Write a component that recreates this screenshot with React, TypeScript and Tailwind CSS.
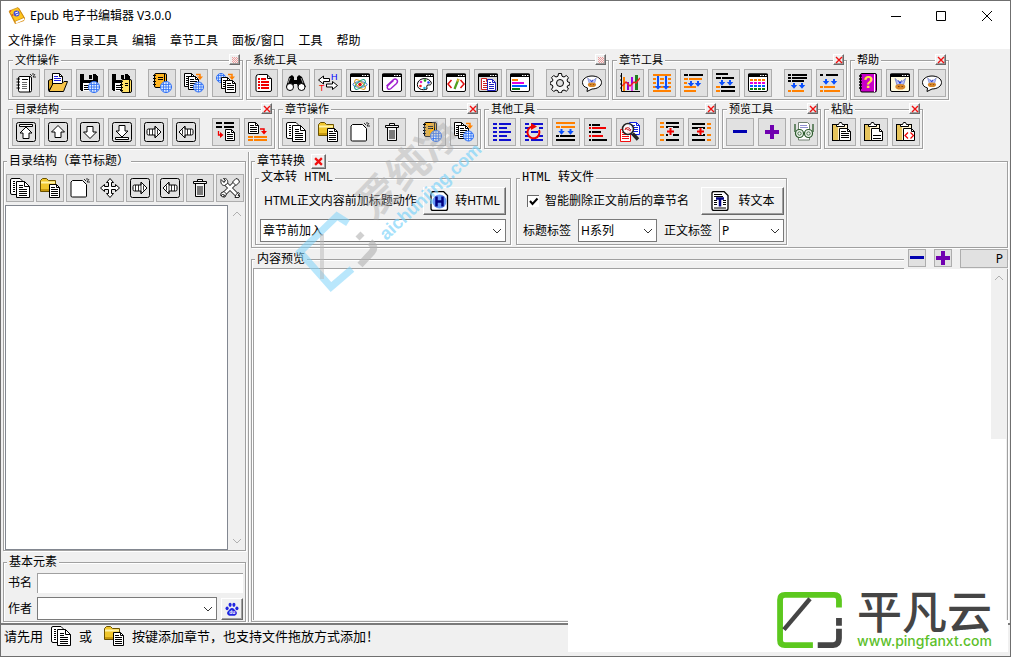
import { useState } from "react";
import type { ReactNode } from "react";

const ETCHED = "border border-[#a0a0a0] shadow-[1px_1px_0_#fff,inset_1px_1px_0_#fff]";
const RAISED = "border border-t-[#fff] border-l-[#fff] border-r-[#696969] border-b-[#696969] bg-[#f0f0f0] shadow-[inset_-1px_-1px_0_#a0a0a0]";

/* ---------- icon parts, all on a 20x20 grid ---------- */

type Bar = [number, number, number, string];

const K = "#000";
const O = "#ff8000";
const R = "#f00000";
const B = "#1010d0";

const Bars = ({ items, h = 2 }: { items: Bar[]; h?: number }) => (
  <g shapeRendering="crispEdges">
    {items.map(([x, y, w, c], i) => (
      <rect key={i} x={x} y={y} width={w} height={h} fill={c} />
    ))}
  </g>
);

const Page = ({ x, y, w = 11, h = 14, c = K, lines = true }: { x: number; y: number; w?: number; h?: number; c?: string; lines?: boolean }) => (
  <g>
    <path d={`M${x + 0.5} ${y + 0.5}h${w - 4}l3 3v${h - 4}h${-(w - 1)}z`} fill="#fff" stroke={c} />
    <path d={`M${x + w - 3.5} ${y + 0.5}v3h3`} fill="none" stroke={c} />
    {lines && <path d={`M${x + 2} ${y + 3.5}h${w - 7}M${x + 2} ${y + 5.5}h${w - 4}M${x + 2} ${y + 7.5}h${w - 4}M${x + 2} ${y + 9.5}h${w - 4}M${x + 2} ${y + 11.5}h${h > 13 ? w - 4 : 0}`} stroke={c} />}
  </g>
);

const Pages = () => (
  <g>
    <path d="M2 .5h8l2 2v14H2q-1.500 0-1.500-1.500V2Q.5.5 2 .5z" fill="#fff" stroke={K} />
    <path d="M3 3.500h2M3 5.500h2M3 7.500h2M3 9.500h2M3 11.500h2M3 13.500h2" stroke={K} />
    <path d="M6.500 3.500h8l5 5v11h-13z" fill="#fff" stroke={K} />
    <path d="M14.500 3.500v5h5M9 7.500h4M9 9.500h4M9 11.500h8M9 13.500h8M9 15.500h8M9 17.500h8" fill="none" stroke={K} />
  </g>
);

const Globe = ({ x, y, r = 5.5 }: { x: number; y: number; r?: number }) => (
  <g>
    <circle cx={x} cy={y} r={r} fill="#e4f0ff" stroke="#2a6cf5" />
    <path d={`M${x - r} ${y}h${2 * r}M${x - r + 1} ${y - 2.5}h${2 * r - 2}M${x - r + 1} ${y + 2.5}h${2 * r - 2}M${x} ${y - r}v${2 * r}M${x - 2.5} ${y - r + 1}v${2 * r - 2}M${x + 2.5} ${y - r + 1}v${2 * r - 2}`} stroke="#2a6cf5" strokeWidth=".8" />
  </g>
);

const Notebook = ({ x = 1, y = 0, w = 14, h = 15, fill = "#ffb41e" }: { x?: number; y?: number; w?: number; h?: number; fill?: string }) => (
  <g>
    <rect x={x + 1.5} y={y + 0.5} width={w - 2} height={h - 1} rx="1.500" fill={fill} stroke={K} />
    <path d={`M${x + w - 2.5} ${y + 1}v${h - 2}M${x + 5} ${y + 4.5}h${w - 9}M${x + 5} ${y + 6.5}h${w - 9}`} stroke={K} />
    <path d={`M${x} ${y + 2.5}h3M${x} ${y + 5.5}h3M${x} ${y + 8.5}h3M${x} ${y + 11.5}h3`} stroke={K} />
  </g>
);

const Floppy = () => (
  <g shapeRendering="crispEdges">
    <path d="M0 1h15l3 3v14H1l-1-1z" fill={K} />
    <rect x="4" y="1" width="9" height="6" fill="#e1e1e1" />
    <rect x="9" y="2" width="3" height="4" fill={K} />
    <rect x="3" y="10" width="11" height="8" fill="#fff" />
    <path d="M4 12.500h9M4 14.500h9M4 16.500h9" stroke={K} />
  </g>
);

const Win = ({ children, fill = "#fff" }: { children?: ReactNode; fill?: string }) => (
  <g>
    <rect x=".5" y="1" width="19" height="17.500" rx="1.500" fill={fill} stroke={K} />
    <path d="M0 1.500q0-1 1-1h18q1 0 1 1v2.500H0z" fill={K} />
    <path d="M12 2.500h1.500M14.500 2.500H16M17 2.500h1.500" stroke="#fff" />
    {children}
  </g>
);

const Down = ({ x, y, h = 6 }: { x: number; y: number; h?: number }) => (
  <path d={`M${x - 1} ${y}h2v${h - 3}h2.200l-3.200 3.700-3.200-3.700h2.200z`} fill="#0a50ff" />
);

const Turn = ({ x, y, c = O }: { x: number; y: number; c?: string }) => (
  <g>
    <path d={`M${x} ${y}h4v3`} fill="none" stroke={c} strokeWidth="1.500" />
    <path d={`M${x + 1} ${y + 2}h6l-3 3.500z`} fill={c} />
  </g>
);

const Boxed = ({ children }: { children: ReactNode }) => (
  <g fill="#fff" stroke={K}>
    <rect x=".5" y=".5" width="19" height="19" rx="2" fill="none" />
    {children}
  </g>
);

const Clipboard = ({ children }: { children?: ReactNode }) => (
  <g>
    <rect x=".5" y="2.500" width="15" height="16" fill="#fff3d0" stroke={K} />
    <path d="M1 3h5v15H1z" fill="#e6c45c" />
    <path d="M4.500 4.500v-2h2l1-2h2l1 2h2v2z" fill="#fff" stroke={K} />
    <Page x={7} y={6} w={12} h={13} lines={false} />
    {children}
  </g>
);

const Folder = () => (
  <g>
    <path d="M.5 13.500v-11l2-2h4l2 2h7v11z" fill="#f0c62c" stroke="#6b5200" />
    <path d="M1 4.500h14" stroke="#fff3a8" strokeWidth="2" />
    <path d="M1 11h8v2H1z" fill="#c89a10" />
    <Page x={9} y={6} w={11} h={14} />
  </g>
);

const Cow = () => (
  <g>
    <path d="M5 5.500l4 3.500h2.500L15.500 5.500 13.500 12H7z" fill="#b4c0ff" stroke="#6870c0" strokeWidth=".7" />
    <path d="M8.500 7.500l1.500 3 1.500-3" fill="none" stroke="#2038d0" />
    <ellipse cx="10.300" cy="13.800" rx="5" ry="2.800" fill="#d98a2b" />
    <path d="M8 13.500h1.500M11.500 13.500H13" stroke="#804010" />
  </g>
);

const Spark = () => <path d="M14 1l2 2M17 0v2M17 4h3M19 1l-2 3" stroke={K} strokeWidth=".8" />;

const Paw = () => (
  <g fill="#2226e0">
    <ellipse cx="3" cy="9" rx="2.200" ry="2.700" />
    <ellipse cx="7.300" cy="4" rx="2.200" ry="3" />
    <ellipse cx="12.700" cy="4" rx="2.200" ry="3" />
    <ellipse cx="17" cy="9" rx="2.200" ry="2.700" />
    <path d="M10 8.500c2.500 0 3.500 2.500 5.500 4.500 3 2.500 1 6.500-2 6.500H6.500c-3 0-5-4-2-6.500C6.500 11 7.500 8.500 10 8.500z" />
    <text x="6" y="17.500" fontSize="7" fontWeight="bold" fill="#fff" fontFamily="Liberation Sans, sans-serif">du</text>
  </g>
);

const icons: Record<string, ReactNode> = {
  newBook: (
    <g>
      <rect x="2.500" y="3.500" width="13" height="15.500" rx="1.500" fill="#fff" stroke={K} />
      <path d="M13.500 4v15M6 6.500h6" stroke={K} />
      <path d="M6 9.500h5M6 11.500h5M6 13.500h5M6 15.500h5" stroke="#444" strokeWidth=".8" />
      <path d="M.5 6h3.500M.5 9h3.500M.5 12h3.500M.5 15h3.500" stroke={K} />
      <Spark />
    </g>
  ),
  open: (
    <g>
      <path d="M.5 17.500V7.500l2-1h4v4z" fill="#d9a520" stroke={K} />
      <Page x={4} y={0} w={11} h={13} lines={false} />
      <path d="M6 3.500h4M6 5.500h7M6 7.500h7" stroke="#2020e0" />
      <path d="M1 18.500l4-8h9l2-2h3.500l-4 10z" fill="#f7c44a" stroke={K} />
    </g>
  ),
  saveWeb: <g><Floppy /><Globe x={14} y={14} /></g>,
  saveBook: <g><Floppy /><Notebook x={8} y={6} w={12} h={14} fill="#ffe066" /></g>,
  bookWeb: <g><Notebook /><Globe x={14} y={14} /></g>,
  pagesWeb: (
    <g><Page x={0} y={0} /><Page x={4} y={3} /><Turn x={12} y={1.5} /><Globe x={14.5} y={14} r={5} /></g>
  ),
  webPages: (
    <g><Globe x={5} y={5} r={4.5} /><Turn x={12} y={1.5} /><Page x={5} y={4} w={10} h={12} /><Page x={9} y={7} w={11} h={13} /></g>
  ),
  redList: (
    <g>
      <path d="M4.500 1.500h8.500l4.500 4.500v11q0 1.500-1.500 1.500H3.500Q2 18.500 2 17V4q0-2.500 2.500-2.500z" fill="#fff" stroke={K} />
      <path d="M13.500 1.500v4h4" fill="none" stroke={K} />
      <Bars items={[[4, 5, 2, R], [7, 5, 5, R], [4, 8, 2, R], [7, 8, 8, R], [4, 11, 2, R], [7, 11, 8, R], [4, 14, 2, R], [7, 14, 8, R]]} />
    </g>
  ),
  find: (
    <g>
      <path d="M3 4l3-2 2 2v3h3V4l2-2 3 2 4 10h-8l-1-3h-3l-1 3H0z" fill={K} />
      <circle cx="4" cy="14" r="3.500" fill="#fff" stroke={K} />
      <circle cx="15.500" cy="14" r="3.500" fill="#fff" stroke={K} />
      <path d="M4 5l-2 5M15 5l2 5" stroke="#fff" strokeOpacity=".6" />
    </g>
  ),
  swap: (
    <g>
      <path d="M.5 7l5-4v2.500h6v3h-6V11zM19.500 12.500l-5-4V11h-6v3h6v2.500z" fill="#fff" stroke={K} />
      <text x="13" y="7" fontSize="9" fill="#0000ff" fontFamily="Liberation Sans, sans-serif">H</text>
      <text x="1" y="18" fontSize="9" fill="#ff0000" fontFamily="Liberation Sans, sans-serif">T</text>
    </g>
  ),
  atom: (
    <Win>
      <g fill="none">
        <ellipse cx="10" cy="11.500" rx="7" ry="2.800" stroke="#3870d0" />
        <ellipse cx="10" cy="11.500" rx="6.500" ry="2.800" stroke="#d8a020" transform="rotate(40 10 11.500)" />
        <ellipse cx="10" cy="11.500" rx="6.500" ry="2.800" stroke="#20a080" transform="rotate(-40 10 11.500)" />
      </g>
      <circle cx="10" cy="11.500" r="1.800" fill="#e01010" />
    </Win>
  ),
  clip: (
    <Win>
      <path d="M4.500 13l6.500-6c3-2.500 6 .5 3.500 3.500l-5.500 5c-2.500 2-5-.5-3-3l5.500-5" fill="none" stroke="#a020d0" strokeWidth="1.400" />
    </Win>
  ),
  palette: (
    <Win>
      <path d="M4 9c3-5 11-4 13 0 1 3-1 3-3 3s-1 2-1 4c-4 2-12 0-9-7z" fill="#fff" stroke={K} />
      <circle cx="7" cy="9" r="1.300" fill="#e020c0" /><circle cx="11" cy="7.500" r="1.300" fill="#18a018" />
      <circle cx="14.500" cy="9.500" r="1.300" fill="#2040ff" /><circle cx="6.500" cy="13" r="1.300" fill="#ff2020" /><circle cx="10.500" cy="15" r="1.300" fill="#20b0e0" />
    </Win>
  ),
  code: (
    <Win>
      <path d="M5.500 7L2 11l3.500 4M14.500 7l3.500 4-3.500 4" fill="none" stroke="#e01010" strokeWidth="1.500" />
      <path d="M12.500 6l-4 10" stroke="#50a020" strokeWidth="2.200" />
      <path d="M12.500 6l-1 2.500" stroke="#e0b030" strokeWidth="2" />
    </Win>
  ),
  winPages: <Win fill="#d8d8d8"><Page x={3} y={5} w={9} h={12} c="#d02020" /><Page x={9} y={6} w={9} h={12} c="#2020c0" /></Win>,
  winBars: (
    <Win>
      <Bars items={[[2, 6, 6, O], [2, 9, 12, "#e000e0"], [2, 12, 15, "#0060ff"], [2, 15, 8, "#108010"]]} />
    </Win>
  ),
  gear: (
    <g fill="none" stroke={K}>
      <path d="M8.500.5h3l.5 2.700 2 .8 2.300-1.500 2.200 2.200L17 7l.8 2 2 .5v2.500l-2 .5L17 14l1.500 2-2.200 2.200L14 17l-2 .8-.5 2h-3L8 17.800 6 17l-2.300 1.500-2.200-2.200L3 14l-.8-2-2-.5V9l2-.5L3 7 1.500 4.700l2.200-2.200L6 4l2-.8z" fill="#f6f6f6" />
      <circle cx="10" cy="10" r="3.500" fill="#e1e1e1" />
    </g>
  ),
  bubble: (
    <g>
      <path d="M10 3c5.500 0 9.500 3 9.500 6.500S15.500 16 10 16l-5 2.500.5-3.500C2 14 .5 12 .5 9.500.5 6 4.500 3 10 3z" fill="#fff" stroke={K} />
      <g transform="translate(1.500 .5) scale(.82)"><Cow /></g>
    </g>
  ),
  chart: (
    <g>
      <Bars h={8} items={[[3, 10, 2, "#ff8000"], [7, 9, 2, "#9000d0"], [11, 10, 2, "#e040e0"], [15, 9, 3, "#208020"]]} />
      <Bars h={7} items={[[3, 4, 2, O], [11, 4, 2, "#a000e0"], [15, 2, 3, "#208020"]]} />
      <path d="M1.500 0v18.500H20M0 3h2M0 7h2M0 11h2M0 15h2" fill="none" stroke={K} />
      <path d="M2 13l4-4 4 4 4-4 2 1 4-5" fill="none" stroke="#f02020" strokeWidth="1.400" />
    </g>
  ),
  fullDown: (
    <g>
      <Bars items={[[1, 1, 18, O], [1, 5, 18, O], [1, 9, 18, O], [1, 13, 18, O], [1, 17, 18, O]]} />
      <path d="M4 3h4v13H4zM12 3h4v13h-4z" fill="#e1e1e1" />
      <Down x={6} y={3} h={13} /><Down x={14} y={3} h={13} />
    </g>
  ),
  moveA: (
    <g>
      <Bars items={[[0, 1, 4, K], [5, 1, 14, K], [0, 5, 4, O], [5, 5, 13, O], [0, 9, 3, O], [0, 13, 12, O], [0, 17, 12, O]]} />
      <Down x={7} y={8} h={5} /><Down x={14} y={8} h={5} />
    </g>
  ),
  moveB: (
    <g>
      <Bars items={[[0, 0, 12, K], [0, 4, 5, K], [6, 4, 12, K], [0, 13, 4, O], [5, 13, 14, K], [0, 17, 4, O], [5, 17, 14, K]]} />
      <Down x={6} y={7} h={5} /><Down x={14} y={7} h={5} />
    </g>
  ),
  table: (
    <Win>
      <Bars items={[[2, 6, 3, O], [6, 6, 3, O], [10, 6, 3, O], [14, 6, 3, O], [2, 9, 3, "#e000e0"], [6, 9, 3, "#e000e0"], [10, 9, 3, "#e000e0"], [14, 9, 3, "#e000e0"], [2, 12, 3, "#0060ff"], [6, 12, 3, "#0060ff"], [10, 12, 3, "#0060ff"], [14, 12, 3, "#0060ff"], [2, 15, 3, "#108010"], [6, 15, 3, "#108010"], [10, 15, 3, "#108010"], [14, 15, 3, "#108010"]]} />
    </Win>
  ),
  splitA: (
    <g>
      <Bars items={[[0, 1, 3, K], [4, 1, 15, K], [0, 4, 3, K], [4, 4, 15, K], [0, 7, 3, K], [4, 7, 12, K], [0, 17, 3, O], [4, 17, 12, O]]} />
      <Down x={6} y={10} h={5} /><Down x={14} y={10} h={5} />
    </g>
  ),
  splitB: (
    <g>
      <Bars items={[[0, 1, 3, K], [6, 1, 12, K], [0, 13, 3, O], [4, 13, 11, O], [0, 17, 3, O], [4, 17, 16, O]]} />
      <Down x={6} y={6} h={5} /><Down x={14} y={6} h={5} />
    </g>
  ),
  helpBook: (
    <g>
      <rect x="2.500" y=".5" width="16" height="18.500" rx="1.500" fill="#c800c8" stroke={K} />
      <path d="M16.500 1v18" stroke="#fff" />
      <path d="M1 3h3M1 6h3M1 9h3M1 12h3M1 15h3" stroke={K} strokeWidth="1.300" />
      <text x="5.500" y="15" fontSize="16" fontWeight="bold" fill="#ffe840" fontFamily="Liberation Sans, sans-serif">?</text>
    </g>
  ),
  winCow: <Win fill="#fffbe0"><Cow /></Win>,
  toTop: <Boxed><path d="M3.500 2.500h13v2h-13zM10 5l6 6h-3v5.500H7V11H4z" /></Boxed>,
  up: <Boxed><path d="M10 3.500l6.500 6.500h-3.500v5.500H7V10H3.500z" /></Boxed>,
  down: <Boxed><path d="M10 16.500L3.500 10H7V4.500h6V10h3.500z" /></Boxed>,
  toEnd: <Boxed><path d="M3.500 15.500h13v2h-13zM10 15L4 9h3V3.500h6V9h3z" /></Boxed>,
  right: <Boxed><path d="M17 10l-6-6v3H4.500Q3 7 3 8.500v3Q3 13 4.500 13H11v3z" /><path d="M5.500 7v6M8.500 7v6M11 5v10M13.500 7.500v5" strokeWidth=".8" /></Boxed>,
  left: <Boxed><path d="M3 10l6-6v3h6.500Q17 7 17 8.500v3q0 1.500-1.500 1.500H9v3z" /><path d="M14.500 7v6M11.500 7v6M9 5v10M6.500 7.500v5" strokeWidth=".8" /></Boxed>,
  linesDoc: (
    <g>
      <Bars items={[[0, 0, 6, K], [8, 0, 10, K], [0, 4, 6, K], [8, 4, 10, K]]} />
      <path d="M2.500 9v4h3" fill="none" stroke={R} strokeWidth="1.300" /><path d="M4 10l3.500 3L4 16z" fill={R} />
      <Page x={9} y={7} w={10} h={12} />
    </g>
  ),
  docLines: (
    <g>
      <Page x={0} y={0} w={11} h={12} />
      <Turn x={12} y={7} c={R} />
      <Bars items={[[0, 14, 5, O], [6, 14, 13, O], [0, 17, 5, O], [6, 17, 13, O]]} />
    </g>
  ),
  pages: <Pages />,
  folder: <Folder />,
  blank: (
    <g>
      <path d="M2.500 2.500h10l4 4v11.500q0 1-1 1H2.500q-1.500 0-1.500-1V4z" fill="#fff" stroke={K} />
      <Spark />
    </g>
  ),
  trash: (
    <g fill="none" stroke={K}>
      <path d="M7.500 3.500v-2h5v2M3.500 3.500h13v2h-13zM5.500 5.500v13h9v-13" fill="#f4f4f4" />
      <path d="M8 8v9M10 8v9M12 8v9" />
    </g>
  ),
  list: <Bars items={[[1, 1, 4, B], [7, 1, 12, B], [1, 5, 4, B], [7, 5, 8, B], [1, 9, 4, B], [7, 9, 12, B], [1, 13, 4, B], [7, 13, 8, B], [1, 17, 4, B], [7, 17, 12, B]]} />,
  refresh: (
    <g>
      <Bars items={[[1, 1, 4, B], [7, 1, 12, B], [1, 5, 4, B], [15, 5, 4, B], [1, 9, 3, B], [7, 9, 7, B], [1, 13, 4, B], [15, 13, 4, B], [1, 17, 4, B], [7, 17, 12, B]]} />
      <path d="M8 4.500a6 6 0 1 0 7 3.500" fill="none" stroke={R} strokeWidth="2" />
      <path d="M7 1l6 3.500L7 8z" fill={R} />
    </g>
  ),
  merge: (
    <g>
      <Bars items={[[0, 0, 19, O], [0, 4, 4, O], [5, 4, 14, O], [0, 13, 3, K], [4, 13, 15, K], [0, 17, 19, K]]} />
      <Down x={5.5} y={7} h={5} /><Down x={14.5} y={7} h={5} />
    </g>
  ),
  mixedList: <Bars items={[[1, 2, 2, K], [4, 2, 8, K], [1, 5, 2, R], [4, 5, 14, R], [1, 9, 2, K], [4, 9, 9, K], [1, 13, 2, R], [4, 13, 11, R], [1, 17, 2, K], [4, 17, 15, K]]} />,
  search: (
    <g>
      <Page x={9} y={0} w={11} h={13} c="#1020e0" /><Page x={0} y={7} w={11} h={13} c="#f01010" />
      <circle cx="8" cy="7" r="5.500" fill="#fff" fillOpacity=".85" stroke="#222" strokeWidth="1.500" />
      <path d="M5 8q2-5 6 0M5 6l6 3" fill="none" stroke="#d02020" />
      <path d="M12.500 11.500L18 17.500" stroke="#222" strokeWidth="3.500" />
    </g>
  ),
  insertA: (
    <g>
      <Bars items={[[0, 0, 4, O], [6, 0, 13, K], [0, 4, 4, O], [6, 4, 13, K], [0, 12, 4, O], [6, 12, 13, K], [0, 17, 4, O], [6, 17, 13, K]]} />
      <path d="M8 5h5v9H8z" fill="#e1e1e1" />
      <path d="M10.500 6v7M7 9.500h7" stroke={R} strokeWidth="2" />
    </g>
  ),
  insertB: (
    <g>
      <Bars items={[[0, 1, 13, K], [15, 1, 4, O], [0, 5, 13, K], [15, 5, 4, O], [0, 12, 13, K], [15, 12, 4, O], [0, 17, 13, K], [15, 17, 4, O]]} />
      <path d="M6 6h5v7H6z" fill="#e1e1e1" />
      <path d="M8.500 6v7M5 9.500h7" stroke={R} strokeWidth="2" />
    </g>
  ),
  minus: <path d="M3 9.500h14" stroke="#0000b0" strokeWidth="3" shapeRendering="crispEdges" />,
  plus: <path d="M10 3v14M3 10h14" stroke="#7000b0" strokeWidth="4" shapeRendering="crispEdges" />,
  glasses: (
    <g>
      <path d="M4.500.5h9l2 2V18h-11z" fill="#fff" stroke="#708070" />
      <path d="M6 3.500h7M6 5.500h8" stroke="#9090d0" />
      <path d="M1 2v8M19 2v8" stroke="#285828" strokeWidth="1.300" />
      <circle cx="5.500" cy="11.500" r="4" fill="#eef4ee" stroke="#285828" strokeWidth="1.200" />
      <circle cx="14.500" cy="11.500" r="4" fill="#eef4ee" stroke="#285828" strokeWidth="1.200" />
      <circle cx="5.500" cy="11.500" r="1.700" fill="none" stroke="#285828" strokeWidth=".8" /><circle cx="14.500" cy="11.500" r="1.700" fill="none" stroke="#285828" strokeWidth=".8" />
    </g>
  ),
  paste: <Clipboard><path d="M9 9.500h5M9 11.500h8M9 13.500h8M9 15.500h8" stroke={K} /></Clipboard>,
  pasteLine: <Clipboard><path d="M9 13.500h8M9 16.500h8" stroke={K} /></Clipboard>,
  pasteCode: <Clipboard><path d="M12 10.500l-3 3 3 3M14.500 10.500l3 3-3 3" fill="none" stroke={R} strokeWidth="1.200" /></Clipboard>,
  move: (
    <path d="M10 .5l3.500 4h-2v4h4v-2l4 3.500-4 3.500v-2h-4v4h2l-3.500 4-3.500-4h2v-4h-4v2L.5 10l4-3.500v2h4v-4h-2z" fill="#fff" stroke={K} />
  ),
  tools: (
    <g strokeLinejoin="round">
      <path d="M3 17L15 5M17 17L5 5" stroke="#222" strokeWidth="4.500" strokeLinecap="round" />
      <path d="M3 17L15 5M17 17L5 5" stroke="#fff" strokeWidth="2.700" strokeLinecap="round" />
      <path d="M1 1.500l3 3 1.500-2-2-2c3-.5 5 2 4 5l-3 2C1.500 7.500.5 5 1 1.500zM12.500 4l3.500-3.500q3 0 3.500 3.500L16 7.500zM1 15l3-1.500L6.500 16 5 19H3.500l1-2-2-.5L1 18z" fill="#fff" stroke="#222" />
      <path d="M15 19.500l1-3 2.500-2 1 1.500-1.500 1 .5 1 1.500-.5-1 2z" fill="#fff" stroke="#222" />
    </g>
  ),
};

const Icon = ({ name, className = "" }: { name: string; className?: string }) => (
  <svg viewBox="0 0 20 20" className={`h-5 w-5 shrink-0 ${className}`} aria-hidden="true">{icons[name]}</svg>
);

/* ---------- controls ---------- */

const ToolButton = ({ name, small }: { name: string; small?: boolean }) => (
  <button
    type="button"
    aria-label={name}
    className={`flex shrink-0 items-center justify-center border border-[#adadad] bg-[#e1e1e1] hover:bg-[#e5f1fb] ${small ? "h-[18px] w-[18px]" : "h-7 w-7"}`}
  >
    <Icon name={name} />
  </button>
);

const CloseX = ({ pale, big }: { pale?: boolean; big?: boolean }) => (
  <button type="button" aria-label="close" className={`flex shrink-0 items-center justify-center ${RAISED} ${big ? "h-[15px] w-[15px]" : "h-[11px] w-[11px]"}`}>
    <svg viewBox="0 0 8 8" className={`shrink-0 ${big ? "h-[9px] w-[9px]" : "h-2 w-2"}`}>
      {pale ? (
        <path d="M1 1.500h6M2 2.500h6M1 3.500h6M2 4.500h6M1 5.500h6M2 6.500h6" stroke="#f09a9a" strokeDasharray="1 1" shapeRendering="crispEdges" />
      ) : (
        <path d="M1 1l6 6M7 1L1 7" stroke="#f01010" strokeWidth={big ? 2 : 1.4} />
      )}
    </svg>
  </button>
);

type Group = { title: string; tools: string[]; extra?: string[]; pale?: boolean };

const ToolGroup = ({ title, tools, extra = [], pale }: Group) => (
  <section className={`relative flex shrink-0 pt-2 pr-0.5 pb-0.5 pl-[3px] ${ETCHED}`}>
    <h2 className="absolute -top-[9px] left-1 bg-[#f0f0f0] px-0.5 text-[11px] leading-4">{title}</h2>
    <div className="absolute -top-[7px] right-0.5"><CloseX pale={pale} /></div>
    <div className="flex gap-3">
      <div className="flex gap-1">{tools.map((t) => <ToolButton key={t} name={t} />)}</div>
      {extra.length > 0 && <div className="flex gap-1">{extra.map((t) => <ToolButton key={t} name={t} />)}</div>}
    </div>
  </section>
);

const Chevron = ({ up, className = "" }: { up?: boolean; className?: string }) => (
  <svg viewBox="0 0 10 6" className={`h-1.5 w-2.5 ${className}`} fill="none" stroke="currentColor">
    <path d={up ? "M1 5l4-4 4 4" : "M1 1l4 4 4-4"} />
  </svg>
);

const Select = ({ id, options, label, className = "" }: { id: string; options: string[]; label?: string; className?: string }) => (
  <div className={`relative ${className}`}>
    <select id={id} aria-label={label} className="block h-[23px] w-full appearance-none rounded-none border border-[#7a7a7a] bg-white pl-0.5 text-xs leading-5 outline-none">
      {options.map((o) => <option key={o}>{o}</option>)}
    </select>
    <Chevron className="pointer-events-none absolute top-[9px] right-1 text-[#333]" />
  </div>
);

const Legend = ({ children, mono }: { children: ReactNode; mono?: boolean }) => (
  <div className={`absolute -top-[9px] left-[3px] flex h-4 items-center gap-1.5 bg-[#f0f0f0] px-0.5 text-xs whitespace-pre ${mono ? "font-['Liberation_Mono','Noto_Sans_CJK_SC',monospace]" : ""}`}>
    {children}
  </div>
);

/* ---------- data ---------- */

const menus = ["文件操作", "目录工具", "编辑", "章节工具", "面板/窗口", "工具", "帮助"];

const rows: Group[][] = [
  [
    { title: "文件操作", tools: ["newBook", "open", "saveWeb", "saveBook"], extra: ["bookWeb", "pagesWeb", "webPages"], pale: true },
    { title: "系统工具", tools: ["redList", "find", "swap", "atom", "clip", "palette", "code", "winPages", "winBars"], extra: ["gear", "bubble"], pale: true },
    { title: "章节工具", tools: ["chart", "fullDown", "moveA", "moveB", "table"], extra: ["splitA", "splitB"] },
    { title: "帮助", tools: ["helpBook", "winCow", "bubble"] },
  ],
  [
    { title: "目录结构", tools: ["toTop", "up", "down", "toEnd", "right", "left"], extra: ["linesDoc", "docLines"] },
    { title: "章节操作", tools: ["pages", "folder", "blank", "trash"], extra: ["bookWeb", "pagesWeb"] },
    { title: "其他工具", tools: ["list", "refresh", "merge", "mixedList", "search"], extra: ["insertA", "insertB"] },
    { title: "预览工具", tools: ["minus", "plus", "glasses"] },
    { title: "粘贴", tools: ["paste", "pasteLine", "pasteCode"] },
  ],
];

const treeTools = ["pages", "folder", "blank", "move", "right", "left", "trash", "tools"];

/* ---------- panels ---------- */

const TitleBar = () => (
  <header className="flex h-[29px] items-center bg-white pl-[7px]">
    <svg viewBox="0 0 18 18" className="h-[18px] w-[18px]">
      <path d="M1 5l10-4 6 10-1 3-9 3z" fill="#d98e10" />
      <path d="M1 4l9-3.500 6 10-9 4z" fill="#ffc61e" stroke="#b87a10" strokeWidth=".6" />
      <path d="M7.500 14.500l8.500-3.500v2l-8 3.500z" fill="#fff" />
      <circle cx="8.500" cy="6.500" r="3" fill="#4850d8" />
      <path d="M7 6l3-1M8 8l2.500-1" stroke="#fff" />
      <path d="M3 3l-1 2M5 9L4 7" stroke="#e04020" />
    </svg>
    <h1 className="ml-1 text-xs leading-5">Epub 电子书编辑器 V3.0.0</h1>
    <div className="ml-auto flex">
      <button type="button" aria-label="minimize" className="flex h-7 w-[45px] items-center justify-center">
        <svg viewBox="0 0 10 10" className="h-2.5 w-2.5"><path d="M0 5.500h10" stroke={K} /></svg>
      </button>
      <button type="button" aria-label="maximize" className="flex h-7 w-[45px] items-center justify-center">
        <svg viewBox="0 0 10 10" className="h-2.5 w-2.5"><path d="M.5.5h9v9h-9z" fill="none" stroke={K} /></svg>
      </button>
      <button type="button" aria-label="close" className="flex h-7 w-[47px] items-center justify-center">
        <svg viewBox="0 0 10 10" className="h-2.5 w-2.5"><path d="M0 0l10 10M10 0L0 10" stroke={K} /></svg>
      </button>
    </div>
  </header>
);

const Sidebar = () => (
  <aside className="flex w-[243px] shrink-0 flex-col gap-[11px] pt-3">
    <section className={`relative flex min-h-0 flex-1 flex-col pt-3 ${ETCHED}`}>
      <Legend>目录结构（章节标题）</Legend>
      <div className="flex gap-0.5 pl-0.5">
        {treeTools.map((t) => <ToolButton key={t} name={t} />)}
      </div>
      <div className="mt-[3px] flex min-h-0 flex-1 pl-px">
        <ul aria-label="目录" className="flex-1 border border-[#828790] bg-white" />
        <div className="flex w-[17px] flex-col items-center justify-between py-1.5 text-[#b0b0b0]">
          <Chevron up />
          <Chevron />
        </div>
      </div>
    </section>

    <section className={`relative flex flex-col gap-1 pt-[10px] pr-0.5 pb-px pl-1 text-xs ${ETCHED}`}>
      <Legend>基本元素</Legend>
      <div className="flex items-center">
        <label htmlFor="book" className="w-[29px]">书名</label>
        <input id="book" className="h-5 min-w-0 flex-1 border-t border-l border-[#a0a0a0] bg-white px-1 outline-none" />
      </div>
      <div className="flex items-center">
        <label htmlFor="author" className="w-[29px]">作者</label>
        <Select id="author" options={[""]} className="flex-1" />
        <button type="button" aria-label="baidu" className={`ml-1 flex h-[22px] w-[22px] items-center justify-center ${RAISED}`}>
          <svg viewBox="0 0 20 20" className="h-3.5 w-3.5"><Paw /></svg>
        </button>
      </div>
    </section>
  </aside>
);

const Convert = () => {
  const [strip, setStrip] = useState(true);
  return (
    <section className={`relative flex gap-[5px] pt-4 pb-0.5 pl-[3px] text-xs ${ETCHED}`}>
      <Legend>
        章节转换
        <CloseX big />
      </Legend>

      <div className={`relative flex w-64 flex-col gap-1 px-1 pt-2 pb-0.5 ${ETCHED}`}>
        <Legend mono>文本转 HTML</Legend>
        <div className="flex h-7 items-center justify-between">
          <span className="pl-1 whitespace-nowrap">HTML正文内容前加标题动作</span>
          <button type="button" className={`flex h-7 w-[83px] items-center justify-center gap-1.5 whitespace-nowrap ${RAISED}`}>
            <svg viewBox="0 0 20 20" className="h-5 w-5">
              <path d="M5 .5h9.500l4 4v13q0 2-2 2H4q-2 0-2-2v-14Q2 .5 5 .5z" fill="#fff" stroke={K} strokeWidth="1.300" />
              <circle cx="10.500" cy="10.500" r="7" fill="#6a9af5" />
              <path d="M7.500 5.500v10M13.500 5.500v10M8 10.500h5" stroke="#000080" strokeWidth="2.500" />
            </svg>
            转HTML
          </button>
        </div>
        <Select id="action" label="标题动作" options={["章节前加入"]} />
      </div>

      <div className={`relative flex w-[271px] flex-col gap-1 pt-2 pr-0.5 pb-0.5 pl-1.5 ${ETCHED}`}>
        <Legend mono>HTML 转文件</Legend>
        <div className="flex h-7 items-center justify-between">
          <label className="flex items-center gap-1.5 pl-1 whitespace-nowrap">
            <input
              type="checkbox"
              checked={strip}
              onChange={(e) => setStrip(e.target.checked)}
              className="peer sr-only"
            />
            <span className="h-3 w-3 border-t border-l border-[#696969] bg-white text-transparent peer-checked:text-black">
              <svg viewBox="0 0 11 11" className="h-[11px] w-[11px]"><path d="M2 5l2.500 3L9.500 2.500" fill="none" stroke="currentColor" strokeWidth="2" /></svg>
            </span>
            智能删除正文前后的章节名
          </label>
          <button type="button" className={`flex h-7 w-[83px] items-center justify-center gap-2 whitespace-nowrap ${RAISED}`}>
            <svg viewBox="0 0 20 20" className="h-5 w-5">
              <path d="M4 .5h10l4 4v13q0 2-2 2H4q-2 0-2-2v-15Q2 .5 4 .5z" fill="#fff" stroke={K} strokeWidth="1.300" />
              <path d="M4 3.500h8M4 5.500h9M4 9.500h3M13 9.500h3M4 11.500h3M13 11.500h3M4 13.500h3M13 13.500h3M4 17h12" stroke={K} />
              <path d="M6 7.500h8M10 7.500v8" stroke="#000080" strokeWidth="2.500" />
            </svg>
            转文本
          </button>
        </div>
        <div className="flex items-center">
          <label htmlFor="heading" className="w-[55px]">标题标签</label>
          <Select id="heading" options={["H系列"]} className="w-[79px]" />
          <label htmlFor="body" className="ml-[7px] w-[55px]">正文标签</label>
          <Select id="body" options={["P"]} className="flex-1" />
        </div>
      </div>
    </section>
  );
};

const Preview = () => (
  <section className={`relative flex min-h-0 flex-1 flex-col px-px pt-2 pb-px ${ETCHED}`}>
    <Legend>内容预览</Legend>
    <div className="absolute -top-[11px] -right-px flex h-5 gap-2 bg-[#f0f0f0] pl-1">
      <ToolButton name="minus" small />
      <ToolButton name="plus" small />
      <button type="button" className="h-[19px] w-12 border border-[#adadad] bg-[#e1e1e1] pr-1 text-right text-xs leading-4">P</button>
    </div>
    <div className="flex min-h-0 flex-1 border-t border-l border-[#a0a0a0] bg-white">
      <textarea aria-label="内容预览" className="flex-1 resize-none bg-white p-1 text-xs outline-none" />
      <div className="flex h-[170px] w-[15px] justify-center bg-[#f0f0f0] pt-1.5 text-[#b0b0b0]"><Chevron up /></div>
    </div>
  </section>
);

const StatusBar = () => (
  <footer className="flex h-[33px] items-start border-t-2 border-[#7a7a7a] pt-px pl-[3px] text-[13px] leading-5">
    <span>请先用</span>
    <Icon name="pages" className="ml-2" />
    <span className="ml-2">或</span>
    <Icon name="folder" className="ml-3" />
    <span className="ml-2">按键添加章节，也支持文件拖放方式添加！</span>
  </footer>
);

const SiteBadge = () => (
  <div className="pointer-events-none absolute right-0.5 bottom-1 flex h-8 w-[440px] items-end justify-end gap-3.5 bg-white pr-4 pb-1">
    <svg viewBox="0 0 68 58" className="h-14 w-[66px] shrink-0" fill="none">
      <path d="M64 16V8q0-5-5-5H8Q3 3 3 8v42q0 5 5 5h29" stroke="#5cc81e" strokeWidth="6" />
      <path d="M7 39L34 7" stroke="#454545" strokeWidth="4.500" />
      <path d="M64 27v8M64 38v10q0 7-6 7H42" stroke="#454545" strokeWidth="6" />
    </svg>
    <div className="flex flex-col items-center">
      <span className="text-[45px] leading-[45px] font-medium text-[#454545]">平凡云</span>
      <span className="font-['Inter',sans-serif] text-sm leading-[14px] font-medium text-[#5cc02a]">www.pingfanxt.com</span>
    </div>
  </div>
);

const Watermark = () => (
  <svg viewBox="0 0 220 200" className="pointer-events-none absolute top-[110px] left-[290px] h-[200px] w-[220px]" fill="none" aria-hidden="true">
    <path d="M57 112l-11-7L9 141l31 35 21-18" stroke="#7fd4fa" strokeOpacity=".55" strokeWidth="7" />
    <path d="M31 123v45" stroke="#b8b8b8" strokeOpacity=".5" strokeWidth="4" />
    <path d="M67 123l4 4M79 131q6 5 2 10l-12 13" stroke="#b0b0b0" strokeOpacity=".6" strokeWidth="7" />
    <g transform="rotate(-43)" fontWeight="bold">
      <text transform="translate(-15 136)" fontSize="41" fill="#a8a8a8" fillOpacity=".42">爱纯净</text>
      <text transform="translate(-19 160)" fontSize="18" fill="#7fd4fa" fillOpacity=".7" fontFamily="Liberation Sans, sans-serif">aichunjing.com</text>
    </g>
  </svg>
);

export default function App() {
  return (
    <div className="relative flex h-screen w-full flex-col overflow-hidden border border-[#6f6f6f] bg-[#f0f0f0] font-['Noto_Sans','Noto_Sans_CJK_SC',sans-serif] text-black">
      <TitleBar />
      <nav className="flex h-[19px] items-end gap-3.5 bg-white pl-[7px] text-xs">
        {menus.map((m) => <button key={m} type="button" className="leading-4">{m}</button>)}
      </nav>
      <div className="flex flex-col gap-[9px] pt-[11px] pl-[7px]">
        {rows.map((row, i) => (
          <div key={i} className="flex gap-[3px]">
            {row.map((g) => <ToolGroup key={g.title} {...g} />)}
          </div>
        ))}
      </div>
      <main className="flex min-h-0 flex-1 gap-0.5 pr-0.5 pb-px pl-0.5">
        <Sidebar />
        <div className="mt-[3px] flex min-w-0 flex-1 flex-col gap-[11px] border-l border-[#a0a0a0] pt-[9px] pl-0.5 shadow-[inset_1px_0_0_#fff]">
          <Convert />
          <Preview />
        </div>
      </main>
      <StatusBar />
      <SiteBadge />
      <Watermark />
    </div>
  );
}
